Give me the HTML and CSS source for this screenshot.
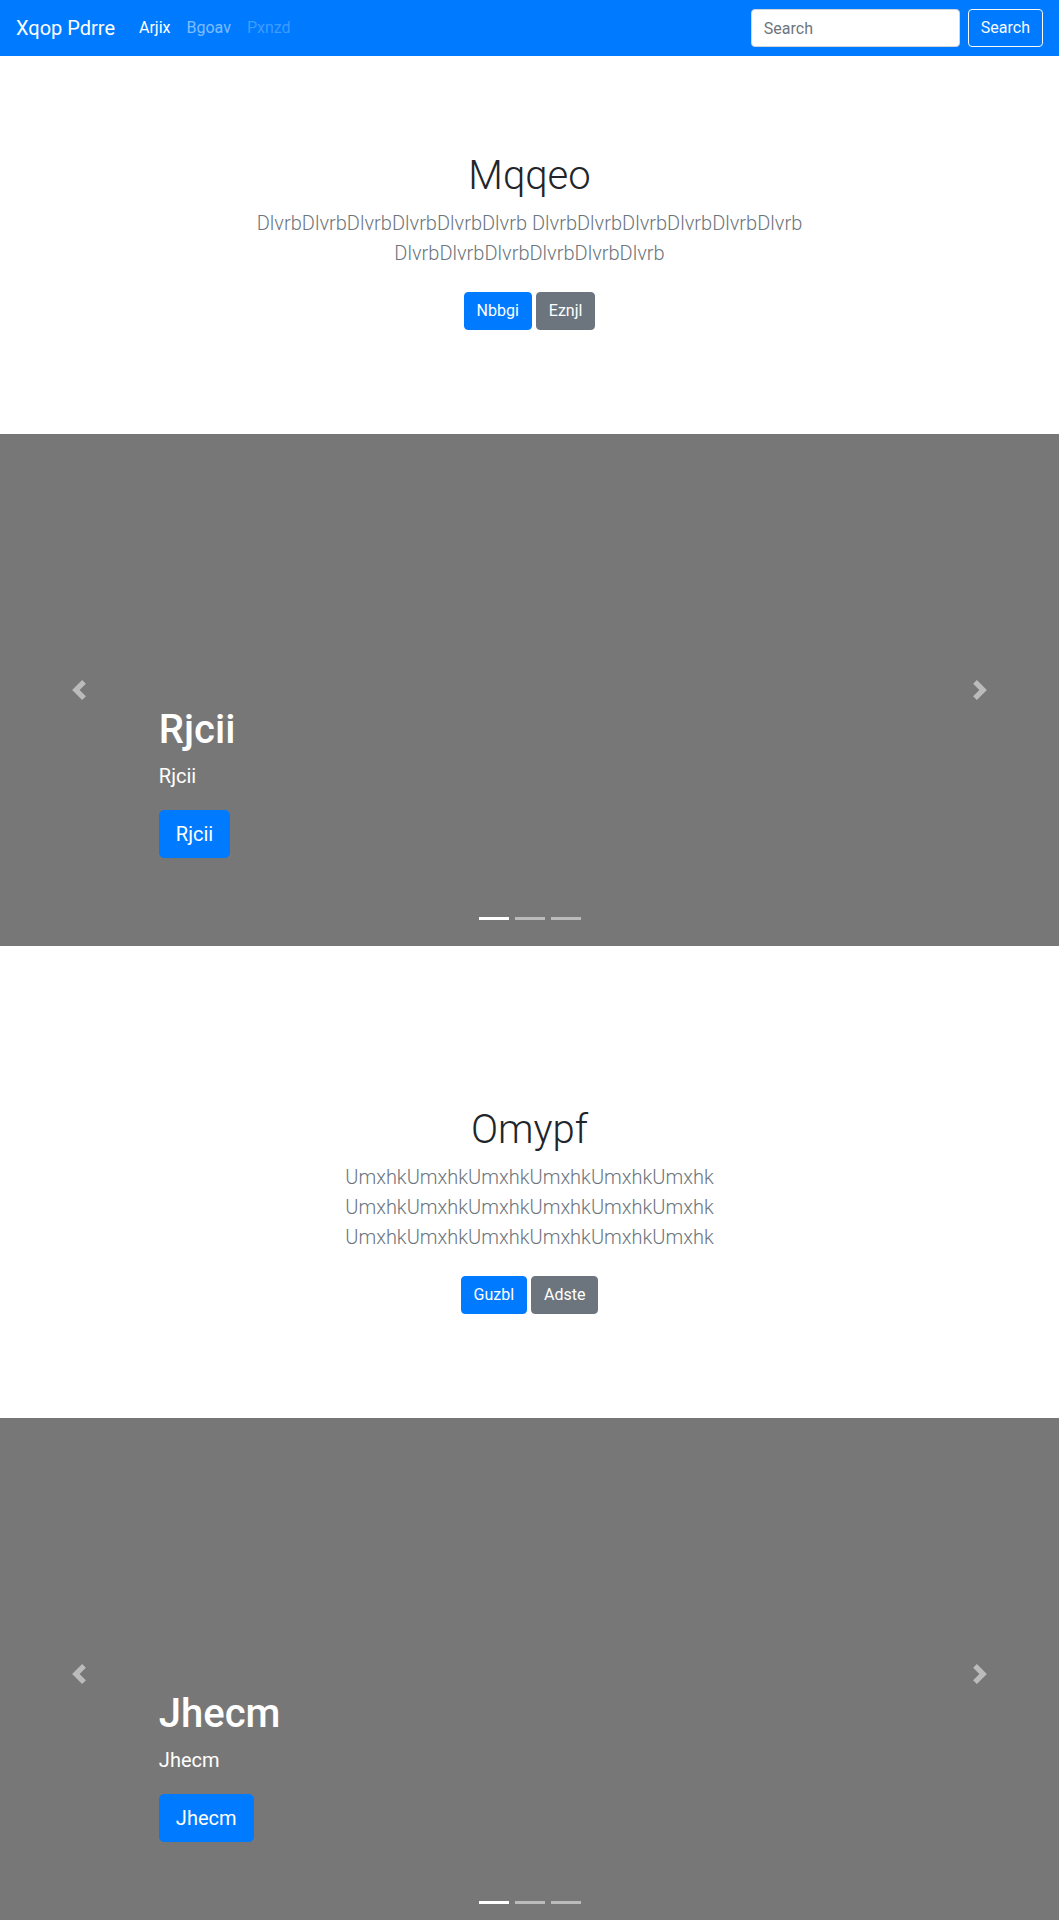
FILE: index.html
```
<!DOCTYPE html>
<html lang="en">
<head>
<meta charset="utf-8">
<title>Xqop Pdrre</title>
<link rel="stylesheet" href="styles.css">
</head>
<body>
<header>
  <nav class="navbar">
    <a class="navbar-brand" href="#">Xqop Pdrre</a>
    <div class="navbar-collapse">
      <ul class="navbar-nav">
        <li><a class="nav-link active" href="#">Arjix</a></li>
        <li><a class="nav-link" href="#">Bgoav</a></li>
        <li><a class="nav-link disabled" href="#">Pxnzd</a></li>
      </ul>
      <form class="search-form">
        <input class="form-control" type="text" placeholder="Search" aria-label="Search">
        <button class="btn btn-outline-light" type="submit">Search</button>
      </form>
    </div>
  </nav>
</header>

<main>
  <section class="jumbotron">
    <div class="container">
      <h1 class="jumbotron-heading">Mqqeo</h1>
      <p class="lead">DlvrbDlvrbDlvrbDlvrbDlvrbDlvrb DlvrbDlvrbDlvrbDlvrbDlvrbDlvrb DlvrbDlvrbDlvrbDlvrbDlvrbDlvrb</p>
      <p class="actions">
        <a href="#" class="btn btn-primary">Nbbgi</a>
        <a href="#" class="btn btn-secondary">Eznjl</a>
      </p>
    </div>
  </section>

  <div class="carousel">
    <ol class="carousel-indicators">
      <li class="active"></li>
      <li></li>
      <li></li>
    </ol>
    <div class="carousel-item">
      <div class="carousel-caption">
        <h1>Rjcii</h1>
        <p>Rjcii</p>
        <p class="caption-action"><a class="btn btn-lg btn-primary" href="#">Rjcii</a></p>
      </div>
    </div>
    <a class="carousel-control carousel-control-prev" href="#" aria-label="Previous">
      <svg class="control-icon" viewBox="0 0 8 8" width="20" height="20"><path fill="#fff" d="M5.25 0l-4 4 4 4 1.5-1.5-2.5-2.5 2.5-2.5-1.5-1.5z"/></svg>
    </a>
    <a class="carousel-control carousel-control-next" href="#" aria-label="Next">
      <svg class="control-icon" viewBox="0 0 8 8" width="20" height="20"><path fill="#fff" d="M2.75 0l-1.5 1.5 2.5 2.5-2.5 2.5 1.5 1.5 4-4-4-4z"/></svg>
    </a>
  </div>

  <section class="jumbotron">
    <div class="container">
      <h1 class="jumbotron-heading">Omypf</h1>
      <p class="lead">UmxhkUmxhkUmxhkUmxhkUmxhkUmxhk UmxhkUmxhkUmxhkUmxhkUmxhkUmxhk UmxhkUmxhkUmxhkUmxhkUmxhkUmxhk</p>
      <p class="actions">
        <a href="#" class="btn btn-primary">Guzbl</a>
        <a href="#" class="btn btn-secondary">Adste</a>
      </p>
    </div>
  </section>

  <div class="carousel">
    <ol class="carousel-indicators">
      <li class="active"></li>
      <li></li>
      <li></li>
    </ol>
    <div class="carousel-item">
      <div class="carousel-caption">
        <h1>Jhecm</h1>
        <p>Jhecm</p>
        <p class="caption-action"><a class="btn btn-lg btn-primary" href="#">Jhecm</a></p>
      </div>
    </div>
    <a class="carousel-control carousel-control-prev" href="#" aria-label="Previous">
      <svg class="control-icon" viewBox="0 0 8 8" width="20" height="20"><path fill="#fff" d="M5.25 0l-4 4 4 4 1.5-1.5-2.5-2.5 2.5-2.5-1.5-1.5z"/></svg>
    </a>
    <a class="carousel-control carousel-control-next" href="#" aria-label="Next">
      <svg class="control-icon" viewBox="0 0 8 8" width="20" height="20"><path fill="#fff" d="M2.75 0l-1.5 1.5 2.5 2.5-2.5 2.5 1.5 1.5 4-4-4-4z"/></svg>
    </a>
  </div>
</main>
</body>
</html>
```

FILE: styles.css
```
* {
  box-sizing: border-box;
}

body {
  margin: 0;
  font-family: Roboto, "Open Sans", sans-serif;
  font-size: 16px;
  line-height: 1.5;
  color: #212529;
  background: #fff;
}

a {
  text-decoration: none;
}

/* Navbar */
.navbar {
  display: flex;
  align-items: center;
  padding: 8px 16px;
  background: #007bff;
}

.navbar-brand {
  font-size: 20px;
  line-height: 30px;
  padding: 5px 0;
  margin-right: 16px;
  color: #fff;
  white-space: nowrap;
}

.navbar-collapse {
  display: flex;
  align-items: center;
  flex-grow: 1;
}

.navbar-nav {
  display: flex;
  list-style: none;
  margin: 0;
  padding: 0;
}

.nav-link {
  display: block;
  padding: 8px;
  color: rgba(255, 255, 255, 0.5);
}

.nav-link.active {
  color: #fff;
}

.nav-link.disabled {
  color: rgba(255, 255, 255, 0.25);
}

.search-form {
  display: flex;
  align-items: center;
  margin: 0 0 0 auto;
}

.form-control {
  width: 209px;
  height: 38px;
  padding: 6px 12px;
  margin-right: 8px;
  font-family: inherit;
  font-size: 16px;
  line-height: 1.5;
  color: #495057;
  background: #fff;
  border: 1px solid #ced4da;
  border-radius: 4px;
}

.form-control::placeholder {
  color: #6c757d;
}

/* Buttons */
.btn {
  display: inline-block;
  padding: 6px 12px;
  font-family: inherit;
  font-size: 16px;
  line-height: 1.5;
  font-weight: 400;
  border: 1px solid transparent;
  border-radius: 4px;
  text-align: center;
  cursor: pointer;
}

.btn-outline-light {
  color: #f8f9fa;
  background: transparent;
  border-color: #f8f9fa;
}

.btn-primary {
  color: #fff;
  background: #007bff;
  border-color: #007bff;
}

.btn-secondary {
  color: #fff;
  background: #6c757d;
  border-color: #6c757d;
}

.btn-lg {
  padding: 8px 16px;
  font-size: 20px;
  line-height: 1.5;
  border-radius: 5px;
}

/* Jumbotron */
.jumbotron {
  padding: 96px 32px;
  text-align: center;
  background: #fff;
}

.container {
  max-width: 640px;
  margin: 0 auto;
  padding: 0 15px;
}

.jumbotron-heading {
  margin: 0 0 8px;
  font-size: 40px;
  font-weight: 300;
  line-height: 1.2;
}

.lead {
  margin: 0 0 16px;
  font-size: 20px;
  font-weight: 300;
  color: #6c757d;
}

.actions {
  display: flex;
  justify-content: center;
  gap: 4px;
  margin: 0;
  padding: 8px 0;
}

/* Carousel */
.carousel {
  position: relative;
  margin-bottom: 64px;
}

.carousel-item {
  height: 512px;
  background: #777;
}

.carousel-caption {
  position: absolute;
  left: 15%;
  right: 15%;
  bottom: 48px;
  z-index: 10;
  padding: 20px 0;
  color: #fff;
  text-align: left;
}

.carousel-caption h1 {
  margin: 0 0 8px;
  font-size: 40px;
  font-weight: 500;
  line-height: 1.2;
}

.carousel-caption p {
  margin: 0 0 20px;
  font-size: 20px;
  line-height: 1.4;
}

.carousel-caption .caption-action {
  line-height: 1.5;
}

.carousel-control {
  position: absolute;
  top: 0;
  bottom: 0;
  width: 15%;
  display: flex;
  align-items: center;
  justify-content: center;
  opacity: 0.5;
}

.carousel-control-prev {
  left: 0;
}

.carousel-control-next {
  right: 0;
}

.control-icon {
  display: block;
}

.carousel-indicators {
  position: absolute;
  left: 0;
  right: 0;
  bottom: 10px;
  z-index: 15;
  display: flex;
  justify-content: center;
  margin: 0 15% 16px;
  padding: 0;
  list-style: none;
}

.carousel-indicators li {
  width: 30px;
  height: 3px;
  margin: 0 3px;
  background: rgba(255, 255, 255, 0.5);
}

.carousel-indicators li.active {
  background: #fff;
}
```
